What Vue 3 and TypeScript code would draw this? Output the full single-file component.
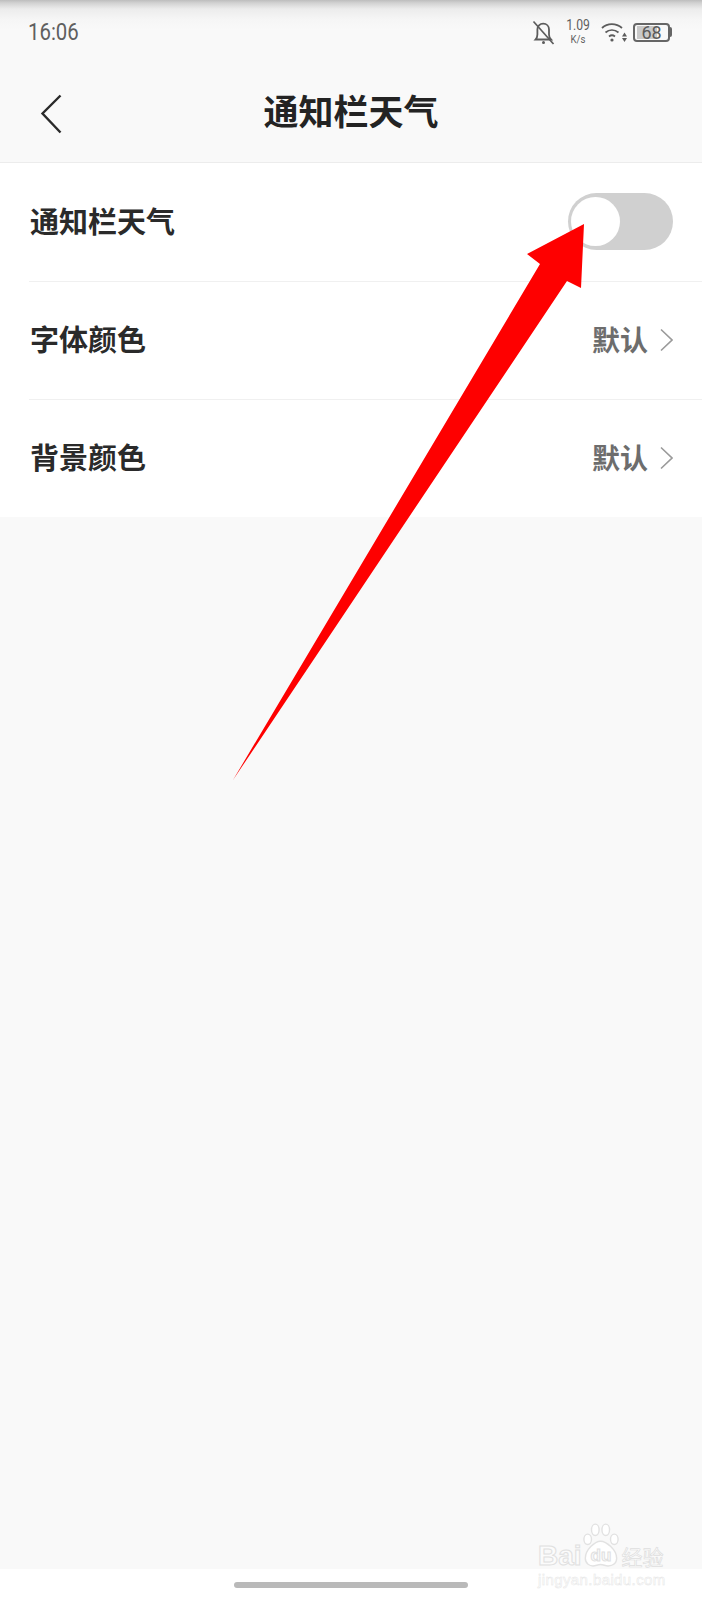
<script setup lang="ts">
const rows: { label: string; value: string }[] = [
  { label: '字体颜色', value: '默认' },
  { label: '背景颜色', value: '默认' },
]
</script>

<template>
  <div class="page">
    <div class="top">
      <div class="status">
        <span class="time">16:06</span>
        <div class="status-right">
          <svg class="bell" width="24" height="25" viewBox="0 0 24 25" fill="none" stroke="#5c5c5c" stroke-width="1.8">
            <path d="M3.500 19.500h15.500c-1.400-1.400-2-2.600-2-5V9.500c0-3.400-2.400-5.800-5.800-5.800-3.400 0-5.800 2.400-5.800 5.800v5c0 2.400-.6 3.600-1.900 5z" />
            <path d="M1.500 1.500l20 22.500" stroke-width="1.700" />
            <circle cx="11.500" cy="22.500" r="1.500" fill="#5c5c5c" stroke="none" />
          </svg>
          <div class="speed"><span class="speed-num">1.09</span><span class="speed-unit">K/s</span></div>
          <svg class="wifi" width="26" height="20" viewBox="0 0 26 20" fill="none" stroke="#5c5c5c" stroke-width="1.800">
            <path d="M1 6C6.500 .8 15 .8 21 6" />
            <path d="M4.500 10.500c3.800-3.200 9-3.200 13 0" />
            <path d="M8 14.500c2-1.600 4-1.600 6 0" />
            <circle cx="11" cy="18" r="1.600" fill="#5c5c5c" stroke="none" />
            <path d="M23.500 10.500l2.500 4h-5zM23.500 20l2.500-4h-5z" fill="#5c5c5c" stroke="none" />
          </svg>
          <div class="battery">
            <div class="battery-body">
              <span class="battery-fill"></span>
              <span class="battery-num">68</span>
            </div>
            <span class="battery-cap"></span>
          </div>
        </div>
      </div>
      <header class="nav">
        <svg class="back" width="22" height="40" viewBox="0 0 22 40" fill="none" stroke="#2a2a2a" stroke-width="2.400">
          <path d="M20.500 1.500L2.500 19.500 20.500 38.500" />
        </svg>
        <h1 class="title">通知栏天气</h1>
      </header>
    </div>

    <section class="list">
      <div class="row">
        <span class="label">通知栏天气</span>
        <span class="switch"><span class="knob"></span></span>
      </div>
      <div v-for="row in rows" :key="row.label" class="row">
        <span class="label">{{ row.label }}</span>
        <span class="value">{{ row.value }}</span>
        <svg class="chev" width="14" height="24" viewBox="0 0 14 24" fill="none" stroke="#9a9a9a" stroke-width="1.600">
          <path d="M2 1.500L13 12 2 22.500" />
        </svg>
      </div>
    </section>

    <div class="fill"></div>

    <footer class="foot"><span class="home"></span></footer>

    <svg class="arrow" width="702" height="1600" viewBox="0 0 702 1600">
      <path d="M584 224L527 254 540 264 233 780 567 281 581 288z" fill="#fe0000" />
    </svg>

    <div class="mark">
      <div class="mark-top">
        <span class="mark-bai">Bai</span>
        <span class="paw-wrap">
          <svg width="38" height="50" viewBox="0 0 40 52" fill="#fff" stroke="#e2e2e2" stroke-width="1.500">
            <ellipse cx="6" cy="19" rx="4" ry="5.500" />
            <ellipse cx="14" cy="9" rx="4" ry="6" />
            <ellipse cx="25" cy="9" rx="4" ry="6" />
            <ellipse cx="34" cy="19" rx="4" ry="5.500" />
            <path d="M19.500 21c-6 0-16 9-16 18 0 6 5 8 8 8 3 0 5-1.500 8-1.500s5 1.500 8 1.500c4 0 9-2 9-8 0-9-11-18-17-18z" />
          </svg>
          <span class="mark-du">du</span>
        </span>
        <span class="mark-cn">经验</span>
      </div>
      <span class="mark-url">jingyan.baidu.com</span>
    </div>
  </div>
</template>

<style>
html, body { margin: 0; padding: 0; background: #f9f9f9; }
</style>

<style scoped>
.page {
  position: relative;
  width: 702px;
  height: 1600px;
  overflow: hidden;
  display: flex;
  flex-direction: column;
  background: #f9f9f9;
  font-family: "Noto Sans CJK SC", "Liberation Sans", sans-serif;
}
.top {
  height: 162px;
  border-bottom: 1px solid #ececec;
  background: linear-gradient(#bdbdbd 0, #d2d2d2 3px, #ececec 9px, #f6f6f6 20px, #f9f9f9 30px);
  display: flex;
  flex-direction: column;
  flex: none;
}
.status {
  height: 64px;
  padding: 0 30px 0 28px;
  display: flex;
  align-items: center;
  justify-content: space-between;
  flex: none;
}
.time {
  font-family: Roboto, "Liberation Sans", sans-serif;
  font-size: 24px;
  color: #5f5f5f;
  display: inline-block;
  transform: scaleX(0.85);
  transform-origin: left center;
}
.status-right { display: flex; align-items: center; }
.bell { margin-right: 9px; }
.speed {
  display: flex;
  flex-direction: column;
  align-items: center;
  width: 26px;
  margin-right: 10px;
  font-family: Roboto, "Liberation Sans", sans-serif;
  color: #5f5f5f;
  transform: scaleX(0.87);
}
.speed-num { font-size: 14px; line-height: 15px; }
.speed-unit { font-size: 11px; line-height: 12px; margin-top: 1px; }
.wifi { margin-right: 6px; }
.battery { display: flex; align-items: center; }
.battery-body {
  position: relative;
  width: 33px;
  height: 15px;
  border: 2px solid #666;
  border-radius: 4px;
  display: flex;
  align-items: center;
  justify-content: center;
}
.battery-fill {
  position: absolute;
  left: 2px;
  top: 1px;
  bottom: 1px;
  width: 20px;
  background: #c9c9c9;
}
.battery-num {
  position: relative;
  font-family: Roboto, "Liberation Sans", sans-serif;
  font-size: 18px;
  line-height: 15px;
  color: #5a5a5a;
}
.battery-cap { width: 2px; height: 10px; background: #666; border-radius: 0 2px 2px 0; }
.nav {
  position: relative;
  flex: 1;
  display: flex;
  align-items: center;
  justify-content: center;
  padding-bottom: 7px;
}
.back { position: absolute; left: 40px; top: 30px; }
.title {
  margin: 0;
  font-size: 35px;
  line-height: 44px;
  font-weight: 700;
  color: #232323;
}
.list {
  background: #fff;
  flex: none;
  padding-top: 1px;
}
.row {
  height: 117px;
  margin-left: 29px;
  padding-right: 29px;
  display: flex;
  align-items: center;
  border-bottom: 1px solid #f0f0f0;
}
.row:last-child { border-bottom: none; }
.label {
  flex: 1;
  padding-left: 1px;
  padding-bottom: 5px;
  font-size: 29px;
  font-weight: 700;
  color: #2a2a2a;
}
.value {
  font-size: 28px;
  font-weight: 700;
  color: #6d6d6d;
  margin-right: 11px;
  padding-bottom: 3px;
}
.chev { margin-bottom: 1px; }
.switch {
  width: 105px;
  height: 57px;
  border-radius: 29px;
  background: #d0d0d0;
  display: flex;
  align-items: center;
  padding-left: 3px;
  box-sizing: border-box;
  margin-bottom: 2px;
}
.knob {
  width: 49px;
  height: 49px;
  border-radius: 50%;
  background: #fff;
}
.fill { flex: 1; }
.foot {
  height: 31px;
  background: #fff;
  display: flex;
  justify-content: center;
  padding-top: 13px;
  box-sizing: border-box;
  flex: none;
}
.home {
  width: 234px;
  height: 6px;
  border-radius: 3px;
  background: #b9b9b9;
}
.arrow { position: absolute; left: 0; top: 0; pointer-events: none; }
.mark {
  position: absolute;
  left: 538px;
  top: 1523px;
  width: 130px;
  font-family: "Liberation Sans", sans-serif;
}
.mark-top { display: flex; align-items: flex-end; height: 46px; }
.mark-bai, .mark-du {
  font-weight: 700;
  -webkit-text-stroke: 1px #e0e0e0;
  color: #fbfbfb;
}
.mark-bai { font-size: 28px; line-height: 26px; }
.paw-wrap { position: relative; display: block; width: 38px; height: 50px; margin-bottom: -2px; flex: none; }
.paw-wrap svg { display: block; }
.mark-du {
  position: absolute;
  left: 9px;
  top: 25px;
  font-size: 17px;
  line-height: 20px;
}
.mark-cn {
  font-family: "Noto Sans CJK SC", sans-serif;
  font-size: 21px;
  line-height: 26px;
  margin-left: 2px;
  white-space: nowrap;
  color: #fbfbfb;
  -webkit-text-stroke: 0.700px #dedede;
}
.mark-url {
  display: block;
  font-size: 15px;
  line-height: 18px;
  margin-top: 2px;
  letter-spacing: 0.400px;
  white-space: nowrap;
  color: #fff;
  -webkit-text-stroke: 0.500px #e6e6e6;
}
</style>
